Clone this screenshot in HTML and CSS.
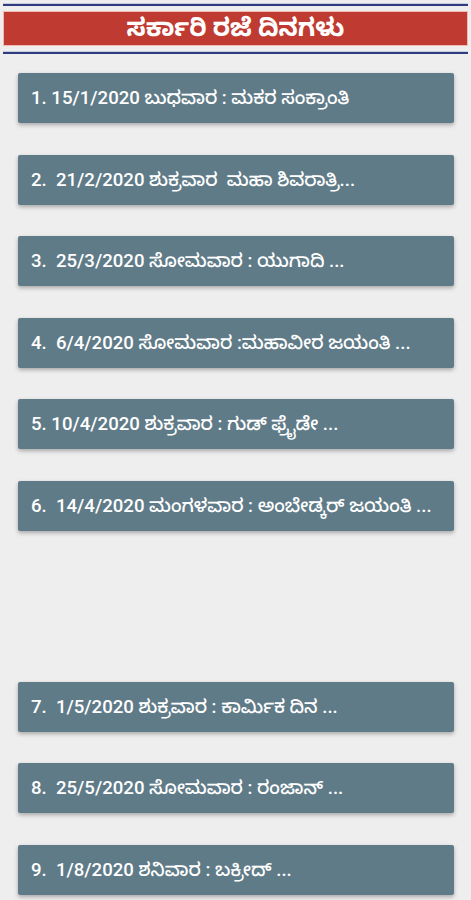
FILE: index.html
```html
<!DOCTYPE html>
<html lang="kn">
<head>
    <meta charset="UTF-8">
    <meta name="viewport" content="width=device-width, initial-scale=1.0">
    <title>ಸರ್ಕಾರಿ ರಜೆ ದಿನಗಳು</title>
    <link rel="stylesheet" href="styles.css">
</head>
<body>

    <div id="cabecera">
        <div class="linea"></div>
        <h1 class="titulo">ಸರ್ಕಾರಿ ರಜೆ ದಿನಗಳು</h1>
        <div class="linea"></div>
    </div>

    <div id="lista">
        <div class="dia">1. 15/1/2020 ಬುಧವಾರ : ಮಕರ ಸಂಕ್ರಾಂತಿ</div>
        <div class="dia">2.  21/2/2020 ಶುಕ್ರವಾರ  ಮಹಾ ಶಿವರಾತ್ರಿ...</div>
        <div class="dia">3.  25/3/2020 ಸೋಮವಾರ : ಯುಗಾದಿ ...</div>
        <div class="dia">4.  6/4/2020 ಸೋಮವಾರ :ಮಹಾವೀರ ಜಯಂತಿ ...</div>
        <div class="dia">5. 10/4/2020 ಶುಕ್ರವಾರ : ಗುಡ್ ಫ್ರೈಡೇ ...</div>
        <div class="dia">6.  14/4/2020 ಮಂಗಳವಾರ : ಅಂಬೇಡ್ಕರ್ ಜಯಂತಿ ...</div>
        <div class="hueco"></div>
        <div class="dia">7.  1/5/2020 ಶುಕ್ರವಾರ : ಕಾರ್ಮಿಕ ದಿನ ...</div>
        <div class="dia">8.  25/5/2020 ಸೋಮವಾರ : ರಂಜಾನ್ ...</div>
        <div class="dia">9.  1/8/2020 ಶನಿವಾರ : ಬಕ್ರೀದ್ ...</div>
    </div>

</body>
</html>
```

FILE: styles.css
```css
/* Sin margenes por defecto */
* {
    margin: 0;
    padding: 0;
    box-sizing: border-box;
}

body {
    background-color: #eeeeee;
    font-family: Roboto, "Noto Sans Kannada", "Noto Sans", sans-serif;
    width: 471px;
    height: 900px;
    overflow: hidden;
}

#cabecera {
    padding: 3px 3px 0 3px;
}

.linea {
    height: 3px;
    background-color: #2f3c7e;
    border-top: 1px solid #c9cbe0;
}

.titulo {
    margin: 5px 0;
    height: 35px;
    background-color: #bf3a30;
    border: 1px solid #f2b8b2;
    color: white;
    font-size: 25px;
    font-weight: bold;
    text-align: center;
    line-height: 31px;
}

#lista {
    display: flex;
    flex-direction: column;
    gap: 31.5px;
    padding: 19px 17px 0 18px;
}

.dia {
    height: 50px;
    background-color: #607b88;
    color: white;
    font-size: 18.6px;
    font-weight: 500;
    line-height: 50px;
    padding-left: 13px;
    white-space: pre;
    border-radius: 2px;
    box-shadow: 0 2px 4px rgba(0, 0, 0, 0.3);
}

.hueco {
    height: 88px;
}
```
